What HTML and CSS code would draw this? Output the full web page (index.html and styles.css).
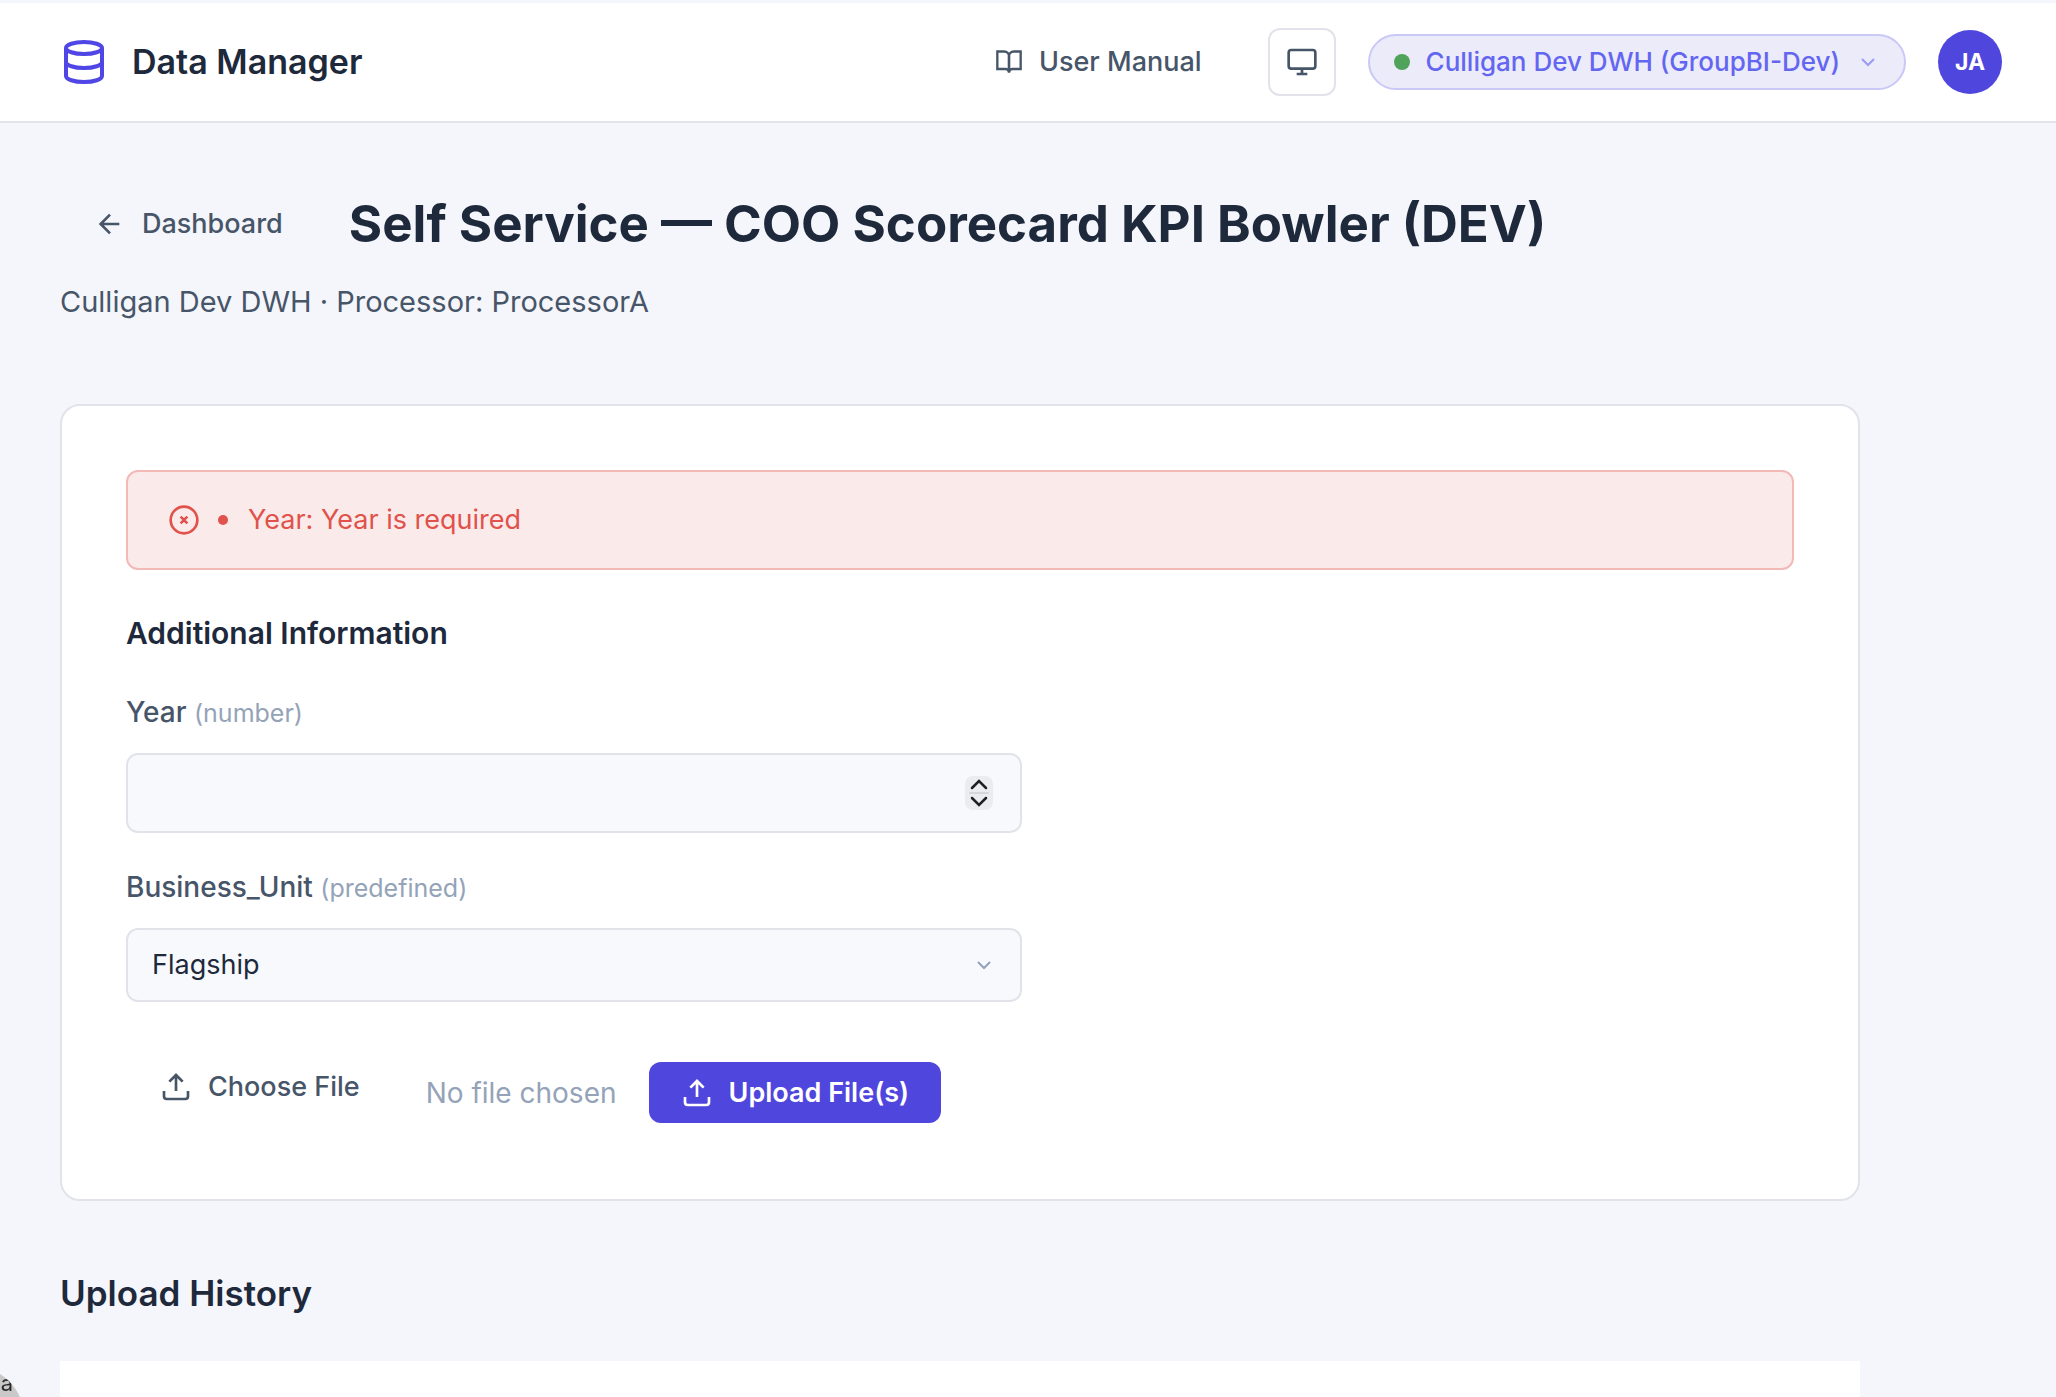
FILE: index.html
```html
<!DOCTYPE html>
<html lang="en">
<head>
  <meta charset="UTF-8">
  <meta name="viewport" content="width=device-width, initial-scale=1.0">
  <title>Data Manager</title>
  <link rel="stylesheet" href="styles.css">
</head>
<body>
  <header class="topbar">
    <div class="brand">
      <svg class="icon icon-logo" viewBox="0 0 24 24"><ellipse cx="12" cy="5" rx="9" ry="3"/><path d="M21 12c0 1.66-4 3-9 3s-9-1.34-9-3"/><path d="M3 5v14c0 1.66 4 3 9 3s9-1.34 9-3V5"/></svg>
      <span>Data Manager</span>
    </div>
    <nav class="topbar-actions">
      <a class="btn-ghost" href="#manual">
        <svg class="icon icon-sm" viewBox="0 0 24 24"><path d="M2 3h6a4 4 0 0 1 4 4v14a3 3 0 0 0-3-3H2z"/><path d="M22 3h-6a4 4 0 0 0-4 4v14a3 3 0 0 1 3-3h7z"/></svg>
        User Manual
      </a>
      <button class="btn-icon" type="button" aria-label="Theme">
        <svg class="icon" viewBox="0 0 24 24"><rect x="2" y="3" width="20" height="14" rx="2"/><path d="M8 21h8M12 17v4"/></svg>
      </button>
      <button class="connection" type="button">
        <span class="dot"></span>
        Culligan Dev DWH (GroupBI-Dev)
        <svg class="icon icon-xs" viewBox="0 0 24 24"><path d="M6 9l6 6 6-6"/></svg>
      </button>
      <button class="avatar" type="button">JA</button>
    </nav>
  </header>

  <main class="page">
    <div class="page-title">
      <a class="btn-ghost" href="#dashboard">
        <svg class="icon" viewBox="0 0 24 24"><path d="M19 12H5M12 19l-7-7 7-7"/></svg>
        Dashboard
      </a>
      <h1>Self Service — COO Scorecard KPI Bowler (DEV)</h1>
    </div>
    <p class="subtitle">Culligan Dev DWH · Processor: ProcessorA</p>

    <form class="card">
      <div class="alert" role="alert">
        <svg class="icon" viewBox="0 0 24 24"><circle cx="12" cy="12" r="10"/><path d="M14.5 9.5l-5 5M9.5 9.5l5 5"/></svg>
        <ul>
          <li>Year: Year is required</li>
        </ul>
      </div>

      <h2>Additional Information</h2>

      <div class="field">
        <label for="year">Year <small>(number)</small></label>
        <div class="control">
          <input type="number" id="year">
          <svg class="stepper" viewBox="0 0 28 34"><rect class="stepper-bg" width="28" height="34" rx="8"/><path class="stepper-line" d="M5 17h18"/><path d="M7 12l7-7 7 7M7 22l7 7 7-7"/></svg>
        </div>
      </div>

      <div class="field">
        <label for="businessUnit">Business_Unit <small>(predefined)</small></label>
        <div class="control">
          <select id="businessUnit">
            <option>Flagship</option>
          </select>
          <svg class="icon icon-xs select-arrow" viewBox="0 0 24 24"><path d="M6 9l6 6 6-6"/></svg>
        </div>
      </div>

      <div class="upload-row">
        <label class="btn-ghost choose-file" for="file">
          <svg class="icon" viewBox="0 0 24 24"><path d="M21 15v4a2 2 0 0 1-2 2H5a2 2 0 0 1-2-2v-4"/><path d="M17 8l-5-5-5 5M12 3v12"/></svg>
          Choose File
        </label>
        <input type="file" id="file" hidden>
        <span class="file-name">No file chosen</span>
        <button class="btn-primary" type="submit">
          <svg class="icon" viewBox="0 0 24 24"><path d="M21 15v4a2 2 0 0 1-2 2H5a2 2 0 0 1-2-2v-4"/><path d="M17 8l-5-5-5 5M12 3v12"/></svg>
          Upload File(s)
        </button>
      </div>
    </form>

    <h2 class="section-title">Upload History</h2>
    <div class="history"></div>
  </main>

  <div class="corner-badge">a</div>
</body>
</html>
```

FILE: styles.css
```css
* {
  box-sizing: border-box;
}
body {
  margin: 0;
  height: 100vh;
  overflow: hidden;
  display: flex;
  flex-direction: column;
  font-family: Inter, sans-serif;
  font-size: 27px;
  line-height: 40px;
  color: #1e293b;
  background: #f5f6fb;
}
h1, h2, p, ul {
  margin: 0;
}
button, input, select {
  font: inherit;
}

.icon {
  width: 32px;
  height: 32px;
  flex: none;
  fill: none;
  stroke: currentColor;
  stroke-width: 2;
}
.icon-logo {
  width: 48px;
  height: 48px;
  color: #4f46e5;
}
.icon-sm {
  width: 28px;
  height: 28px;
}
.icon-xs {
  width: 24px;
  height: 24px;
}

/* Top bar */
.topbar {
  display: flex;
  align-items: center;
  justify-content: space-between;
  flex: none;
  height: 123px;
  padding: 0 54px 0 60px;
  background: #fff;
  border-top: 3px solid #f5f6fb;
  border-bottom: 2px solid #e2e3ea;
}
.brand {
  display: flex;
  align-items: center;
  gap: 24px;
  font-size: 34px;
  font-weight: 600;
}
.topbar-actions {
  display: flex;
  align-items: center;
  gap: 32px;
}
.btn-ghost {
  display: inline-flex;
  align-items: center;
  gap: 16px;
  padding: 0 34px;
  font-weight: 500;
  color: #475569;
  text-decoration: none;
}
.btn-icon {
  display: flex;
  align-items: center;
  justify-content: center;
  width: 68px;
  height: 68px;
  padding: 0;
  color: #475569;
  background: #fff;
  border: 2px solid #e2e3ea;
  border-radius: 12px;
}
.connection {
  display: flex;
  align-items: center;
  gap: 16px;
  height: 56px;
  padding: 0 24px;
  font-size: 26px;
  font-weight: 500;
  color: #6366f1;
  background: #ecebfa;
  border: 2px solid #c9c8f7;
  border-radius: 28px;
}
.connection .icon {
  opacity: 0.6;
}
.dot {
  width: 16px;
  height: 16px;
  border-radius: 50%;
  background: #50a35a;
}
.avatar {
  width: 64px;
  height: 64px;
  padding: 0;
  font-size: 23px;
  font-weight: 700;
  color: #fff;
  background: #4f46dd;
  border: 0;
  border-radius: 50%;
}

/* Page */
.page {
  display: flex;
  flex-direction: column;
  flex: 1;
  max-width: 1920px;
  padding: 65px 60px 0;
}
.page-title {
  display: flex;
  align-items: center;
  gap: 32px;
}
h1 {
  font-size: 51px;
  font-weight: 700;
  line-height: 72px;
}
.subtitle {
  margin-top: 22px;
  font-size: 29px;
  color: #475569;
}

/* Upload form */
.card {
  margin-top: 82px;
  padding: 64px 64px 76px;
  background: #fff;
  border: 2px solid #e2e3ea;
  border-radius: 20px;
}
.alert {
  display: flex;
  align-items: center;
  gap: 18px;
  padding: 28px 40px;
  color: #e0524b;
  background: #faeaea;
  border: 2px solid #f2b9b7;
  border-radius: 12px;
}
.alert ul {
  padding: 0;
  list-style: none;
}
.alert li {
  display: flex;
  align-items: center;
  gap: 20px;
}
.alert li::before {
  content: "";
  width: 10px;
  height: 10px;
  border-radius: 50%;
  background: currentColor;
}
.card h2 {
  margin: 43px 0 39px;
  font-size: 30px;
  font-weight: 600;
}
.field {
  width: 896px;
  max-width: 100%;
  margin-bottom: 34px;
}
.field label {
  display: block;
  margin-bottom: 20px;
  font-size: 28px;
  font-weight: 500;
  color: #475569;
}
.field small {
  font-size: 25px;
  font-weight: 400;
  color: #94a3b8;
}
.control {
  position: relative;
}
.control input,
.control select {
  display: block;
  width: 100%;
  height: 80px;
  padding: 0 24px;
  color: #1e293b;
  background: #f8f9fd;
  border: 2px solid #e2e3ea;
  border-radius: 12px;
  appearance: none;
}
.control select {
  height: 74px;
}
.control input::-webkit-inner-spin-button {
  display: none;
}
.stepper {
  position: absolute;
  top: 23px;
  right: 29px;
  width: 28px;
  height: 34px;
  fill: none;
  stroke: #1f2023;
  stroke-width: 2.5;
  stroke-linecap: round;
  pointer-events: none;
}
.stepper-bg {
  fill: #ebecef;
  stroke: none;
}
.stepper-line {
  stroke: #d5d6d9;
  stroke-width: 2;
}
.select-arrow {
  position: absolute;
  top: 25px;
  right: 26px;
  color: #94a3b8;
  pointer-events: none;
}
.upload-row {
  display: flex;
  align-items: center;
  margin-top: 60px;
}
.choose-file {
  margin-bottom: 12px;
}
.file-name {
  margin: 0 32px;
  font-size: 28px;
  color: #94a3b8;
}
.btn-primary {
  display: inline-flex;
  align-items: center;
  gap: 16px;
  height: 61px;
  padding: 0 32px;
  font-weight: 600;
  color: #fff;
  background: #4f46dd;
  border: 0;
  border-radius: 12px;
}

/* History */
.section-title {
  margin: 72px 0 48px;
  font-size: 35px;
  font-weight: 600;
}
.history {
  flex: 1;
  background: #fff;
}

.corner-badge {
  position: fixed;
  left: -85px;
  bottom: -78px;
  width: 110px;
  height: 110px;
  padding-right: 12px;
  text-align: right;
  font-size: 22px;
  line-height: 36px;
  color: #2b2b2b;
  background: #c9c9c9;
  border-radius: 50%;
  overflow: hidden;
}
```
